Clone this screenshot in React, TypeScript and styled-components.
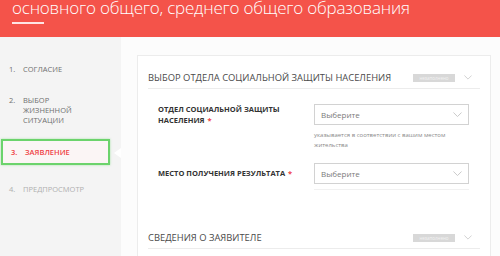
import styled, { createGlobalStyle } from "styled-components";

const GlobalStyle = createGlobalStyle`
  html, body {
    margin: 0;
    padding: 0;
    width: 500px;
    height: 256px;
    overflow: hidden;
    background: #fafafa;
    font-family: "Open Sans", "Liberation Sans", sans-serif;
  }
  * { box-sizing: border-box; }
`;

const Page = styled.div`
  width: 500px;
  height: 256px;
  display: flex;
  flex-direction: column;
  overflow: hidden;
`;

const Header = styled.header`
  height: 37px;
  flex: none;
  background: #f4534a;
  padding-left: 12px;
  overflow: hidden;
`;

const Title = styled.h1`
  margin: -1.5px 0 0;
  font-size: 17px;
  line-height: 18px;
  font-weight: 300;
  letter-spacing: -0.2px;
  color: #fff;
  white-space: nowrap;
`;

const Underline = styled.div`
  width: 32px;
  height: 2px;
  margin-top: 5.5px;
  background: rgba(255, 255, 255, 0.85);
`;

const Body = styled.div`
  flex: 1;
  display: flex;
  min-height: 0;
`;

const Sidebar = styled.ol`
  width: 121px;
  flex: none;
  margin: 0;
  padding: 19.5px 0 0;
  list-style: none;
  background: #f4f4f4;
  display: flex;
  flex-direction: column;
  gap: 7px;
`;

const Step = styled.li<{ $state: "done" | "active" | "todo" }>`
  position: relative;
  display: grid;
  grid-template-columns: 14px 1fr;
  font-size: 7.5px;
  line-height: 10px;
  text-transform: uppercase;
  color: ${(p) =>
    p.$state === "active" ? "#ef3f45" : p.$state === "todo" ? "#b0b0b0" : "#6f6f6f"};
  font-weight: ${(p) => (p.$state === "active" ? 600 : 400)};
  padding: ${(p) => (p.$state === "active" ? "6.5px 0 5.5px 8px" : "7px 0 7px 9px")};
  ${(p) =>
    p.$state === "active" &&
    `
    margin: 0 0 5px 1px;
    width: 109px;
    border: 2px solid #6cd36c;
    background: #fbf5f5;
    box-shadow: 0 0 2px rgba(108, 211, 108, 0.6);
    &::after {
      content: "";
      position: absolute;
      right: -13px;
      top: 50%;
      transform: translateY(-40%);
      border-top: 5.5px solid transparent;
      border-bottom: 5.5px solid transparent;
      border-right: 7px solid #fff;
    }
  `}
`;

const Main = styled.main`
  flex: 1;
  padding: 18px 9px 0 16px;
  background: #fcfcfc;
  overflow: hidden;
`;

const Card = styled.section`
  background: #fff;
  border: 1px solid #ececec;
  padding: 0 10px;
  height: 300px;
`;

const SectionHead = styled.div`
  display: flex;
  align-items: center;
  height: 33px;
  padding-top: 11px;
  border-bottom: 1px solid #ececec;
`;

const SectionTitle = styled.h2`
  flex: 1;
  margin: 0;
  font-size: 9.4px;
  font-weight: 400;
  color: #4a4a4a;
  text-transform: uppercase;
  white-space: nowrap;
`;

const Badge = styled.span`
  width: 42px;
  height: 8px;
  flex: none;
  background: #d8d8d8;
  color: #f3f3f3;
  font-size: 4.5px;
  line-height: 8px;
  text-align: center;
  overflow: hidden;
`;

const HeadChevron = styled.span`
  display: flex;
  margin: 0 8px 0 9px;
  flex: none;
`;

const Fields = styled.div<{ $top: number }>`
  display: grid;
  grid-template-columns: 156px 155px;
  padding-left: 10px;
  margin-top: ${(p) => p.$top}px;
`;

const Label = styled.label`
  align-self: center;
  max-width: 135px;
  font-size: 7.5px;
  line-height: 11px;
  font-weight: 700;
  color: #333;
  text-transform: uppercase;
`;

const Required = styled.span`
  color: #ef3f45;
  margin-left: 3px;
`;

const Select = styled.div`
  height: 21px;
  border: 1px solid #d2d2d2;
  display: flex;
  align-items: center;
  justify-content: space-between;
  padding: 0 6px 0 6px;
  font-size: 8px;
  color: #7a7a7a;
`;

const Hint = styled.p`
  grid-column: 2;
  margin: 4px 0 0;
  font-size: 6px;
  line-height: 10px;
  color: #8a8a8a;
  max-width: 150px;
`;

const FieldGap = styled.div`
  grid-column: 1 / -1;
  height: 13px;
`;

const FieldLine = styled.div`
  grid-column: 2;
  margin-top: 5px;
  border-top: 1px solid #f1f1f1;
`;

const SectionSpacer = styled.div`
  height: 26px;
`;

const Chevron = ({ w = 9, color = "#c4c4c4" }: { w?: number; color?: string }) => (
  <svg width={w} height={w / 2 + 1} viewBox="0 0 10 6">
    <polyline points="0.5,0.5 5,5 9.5,0.5" fill="none" stroke={color} strokeWidth="1" />
  </svg>
);

const SectionHeader = ({ title }: { title: string }) => (
  <SectionHead>
    <SectionTitle>{title}</SectionTitle>
    <Badge>незаполнено</Badge>
    <HeadChevron>
      <Chevron w={8} color="#c6c6c6" />
    </HeadChevron>
  </SectionHead>
);

export default function App() {
  return (
    <>
      <GlobalStyle />
      <Page>
        <Header>
          <Title>основного общего, среднего общего образования</Title>
          <Underline />
        </Header>
        <Body>
          <Sidebar>
            <Step $state="done">
              <span>1.</span>
              <span>Согласие</span>
            </Step>
            <Step $state="done">
              <span>2.</span>
              <span>
                Выбор
                <br />
                жизненной
                <br />
                ситуации
              </span>
            </Step>
            <Step $state="active">
              <span>3.</span>
              <span>Заявление</span>
            </Step>
            <Step $state="todo">
              <span>4.</span>
              <span>Предпросмотр</span>
            </Step>
          </Sidebar>
          <Main>
            <Card>
              <SectionHeader title="Выбор отдела социальной защиты населения" />
              <Fields $top={15}>
                <Label>
                  Отдел социальной защиты населения<Required>*</Required>
                </Label>
                <Select>
                  Выберите
                  <Chevron />
                </Select>
                <Hint>указывается в соответствии с вашим местом жительства</Hint>
                <FieldGap />
                <Label>
                  Место получения результата<Required>*</Required>
                </Label>
                <Select>
                  Выберите
                  <Chevron />
                </Select>
                <FieldLine />
              </Fields>
              <SectionSpacer />
              <SectionHeader title="Сведения о заявителе" />
            </Card>
          </Main>
        </Body>
      </Page>
    </>
  );
}
